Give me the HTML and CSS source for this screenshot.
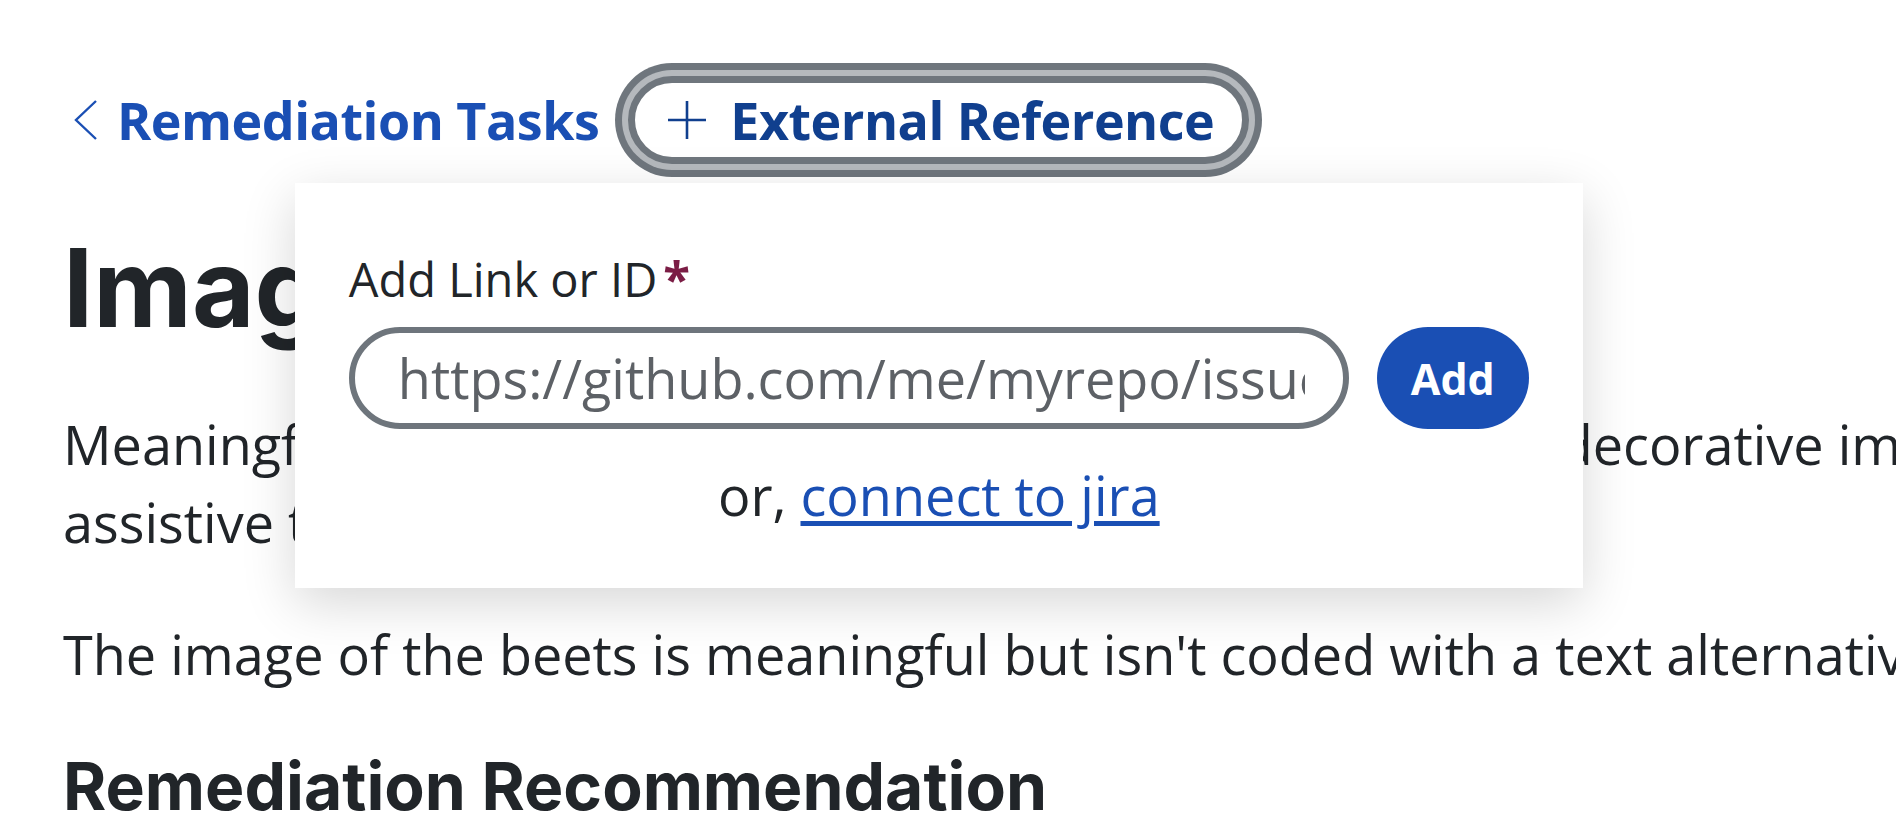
FILE: index.html
```html
<!DOCTYPE html>
<html lang="en">
<head>
<meta charset="utf-8">
<title>Image Alternative Text – Remediation Task</title>
<link rel="stylesheet" href="styles.css">
</head>
<body>
<main class="page">
  <nav class="toolbar">
    <a class="back-link" href="#">
      <svg class="chevron" viewBox="0 0 23 40" aria-hidden="true"><path d="M22 1 L2 20 L22 39"/></svg>
      <span>Remediation Tasks</span>
    </a>
    <div class="ref-wrap">
      <button class="ref-btn" type="button">
        <svg class="plus" viewBox="0 0 38 38" aria-hidden="true"><path d="M19 0 V38 M0 19 H38"/></svg>
        <span>External Reference</span>
      </button>
      <div class="popover" role="dialog">
        <label class="field-label" for="ref-input">Add Link or ID<span class="req">*</span></label>
        <div class="field-row">
          <input id="ref-input" class="field-input" type="text" placeholder="https://github.com/me/myrepo/issues/1">
          <button class="add-btn" type="button">Add</button>
        </div>
        <p class="alt">or, <a href="#">connect to jira</a></p>
      </div>
    </div>
  </nav>

  <h1 class="title">Image Alternative Text</h1>
  <p class="body-text">Meaningful images must have a useful text alternative, and decorative images must be hidden from assistive technology.</p>
  <p class="body-text">The image of the beets is meaningful but isn't coded with a text alternative.</p>
  <h2 class="subtitle">Remediation Recommendation</h2>
</main>
</body>
</html>
```

FILE: styles.css
```css
html, body {
  margin: 0;
  padding: 0;
  background: #ffffff;
  overflow: hidden;
}

body {
  font-family: "Open Sans", "Noto Sans", sans-serif;
  color: #212529;
}

.page {
  width: 2600px;
  padding: 76px 0 0 63px;
}

.toolbar {
  display: flex;
  align-items: center;
  gap: 29px;
}

.back-link {
  display: flex;
  align-items: center;
  gap: 20px;
  padding-left: 11px;
  color: #1a4fb4;
  text-decoration: none;
  font-weight: 700;
  font-size: 52px;
  letter-spacing: -0.5px;
  line-height: 1;
}

.chevron {
  display: block;
  width: 23px;
  height: 40px;
  fill: none;
  stroke: currentColor;
  stroke-width: 2.4;
}

.ref-wrap {
  position: relative;
}

.ref-btn {
  display: flex;
  align-items: center;
  gap: 24px;
  height: 88px;
  box-sizing: border-box;
  padding: 0 28px 0 33px;
  border: 7px solid #6f767d;
  border-radius: 44px;
  background: #ffffff;
  color: #103f8e;
  font-family: "Open Sans", "Noto Sans", sans-serif;
  font-weight: 700;
  font-size: 52px;
  letter-spacing: -0.5px;
  line-height: 1;
  box-shadow: 0 0 0 6px #b5b9bd, 0 0 0 13px #6f767d;
}

.plus {
  display: block;
  width: 38px;
  height: 38px;
  fill: none;
  stroke: currentColor;
  stroke-width: 2.6;
}

.popover {
  position: absolute;
  top: calc(100% + 19px);
  left: 50%;
  transform: translateX(-50%);
  width: 1288px;
  box-sizing: border-box;
  padding: 62px 54px 54px;
  background: #ffffff;
  box-shadow: 0 15px 50px rgba(0, 0, 0, 0.16);
  z-index: 10;
}

.field-label {
  display: block;
  font-size: 47px;
  line-height: 67px;
  margin-bottom: 14px;
  color: #212529;
}

.req {
  margin-left: 6px;
  color: #7b1d45;
  font-weight: 700;
  font-size: 49px;
}

.field-row {
  display: flex;
  gap: 28px;
}

.field-input {
  flex: 1;
  min-width: 0;
  height: 102px;
  box-sizing: border-box;
  border: 6px solid #6e757c;
  border-radius: 51px;
  padding: 0 38px 0 43px;
  background: #ffffff;
  color: #212529;
  font-family: "Open Sans", "Noto Sans", sans-serif;
  font-size: 54px;
  outline: none;
}

.field-input::placeholder {
  color: #5d6166;
  opacity: 1;
}

.add-btn {
  flex: none;
  width: 152px;
  height: 102px;
  padding: 0;
  border: 0;
  border-radius: 51px;
  background: #1a4fb4;
  color: #ffffff;
  font-family: "Open Sans", "Noto Sans", sans-serif;
  font-weight: 700;
  font-size: 43px;
  line-height: 1;
}

.alt {
  margin: 27px 0 0;
  text-align: center;
  font-size: 54px;
  line-height: 78px;
  color: #212529;
}

.alt a {
  color: #1a4fb4;
  text-decoration: underline;
  text-decoration-thickness: 5px;
  text-underline-offset: 5px;
}

.title {
  margin: 59px 0 52px;
  font-family: Inter, "Liberation Sans", sans-serif;
  font-weight: 700;
  font-size: 108px;
  line-height: 1.2;
  color: #212529;
}

.body-text {
  margin: 0 0 54px;
  font-size: 54px;
  line-height: 78px;
  color: #212529;
}

.subtitle {
  margin: 0;
  font-family: Inter, "Liberation Sans", sans-serif;
  font-weight: 700;
  font-size: 66px;
  line-height: 1.2;
  color: #212529;
}
```
